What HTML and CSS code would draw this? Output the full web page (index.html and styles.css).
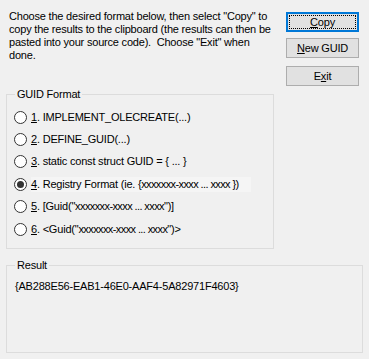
FILE: index.html
```html
<!DOCTYPE html>
<html lang="en">
<head>
    <meta charset="UTF-8">
    <title>Create GUID</title>
    <link rel="stylesheet" href="styles.css">
</head>
<body>
    <div class="top">
        <p class="intro">Choose the desired format below, then select "Copy" to<br>copy the results to the clipboard (the results can then be<br>pasted into your source code).&nbsp; Choose "Exit" when<br>done.</p>
        <div class="buttons">
            <button class="btn default"><span class="focus"><u>C</u>opy</span></button>
            <button class="btn"><u>N</u>ew GUID</button>
            <button class="btn exit">E<u>x</u>it</button>
        </div>
    </div>

    <fieldset class="group formats">
        <legend>GUID Format</legend>
        <div class="row"><span class="radio"></span><span class="label"><u>1</u>. IMPLEMENT_OLECREATE(...)</span></div>
        <div class="row"><span class="radio"></span><span class="label"><u>2</u>. DEFINE_GUID(...)</span></div>
        <div class="row"><span class="radio"></span><span class="label"><u>3</u>. static const struct GUID = { ... }</span></div>
        <div class="row"><span class="radio checked"></span><span class="label lit"><u>4</u>. Registry Format (ie. <span class="xs">{xxxxxxx-xxxx ... xxxx }</span>)</span></div>
        <div class="row"><span class="radio"></span><span class="label"><u>5</u>. [Guid("<span class="xs">xxxxxxx-xxxx ... xxxx</span>")]</span></div>
        <div class="row"><span class="radio"></span><span class="label"><u>6</u>. &lt;Guid("<span class="xs">xxxxxxx-xxxx ... xxxx</span>")&gt;</span></div>
    </fieldset>

    <fieldset class="group result">
        <legend>Result</legend>
        <div class="guid">{AB288E56-EAB1-46E0-AAF4-5A82971F4603}</div>
    </fieldset>
</body>
</html>
```

FILE: styles.css
```css
* {
    box-sizing: border-box;
}
body {
    margin: 0;
    background: #f0f0f0;
    font-family: "Liberation Sans", Arial, sans-serif;
    font-size: 11px;
    line-height: 13px;
    letter-spacing: -0.2px;
    color: #000;
}
u {
    text-decoration: underline;
    text-underline-offset: 1px;
}
.top {
    display: flex;
    height: 88px;
}
.intro {
    margin: 0;
    padding: 10px 0 0 9px;
    width: 286px;
}
.buttons {
    display: flex;
    flex-direction: column;
    padding-top: 12px;
}
.btn {
    width: 73px;
    height: 20px;
    padding: 0;
    background: #e1e1e1;
    border: 1px solid #adadad;
    font: inherit;
    letter-spacing: inherit;
    color: #000;
}
.btn + .btn {
    margin-top: 6px;
}
.btn.exit {
    margin-top: 8px;
}
.btn.default {
    border-color: #0078d7;
    box-shadow: inset 0 0 0 1px #0078d7;
    padding: 2px;
}
.focus {
    display: block;
    height: 100%;
    line-height: 13px;
    border: 1px dotted #000;
}
.group {
    margin: 0 0 0 6px;
    padding: 0 8px 0 8px;
    border: 1px solid #dcdcdc;
}
.group legend {
    padding: 0 2px;
    line-height: 13px;
}
.formats {
    width: 268px;
    padding-top: 5px;
    padding-bottom: 8px;
}
.row {
    display: flex;
    align-items: center;
    height: 22.4px;
}
.radio {
    width: 13px;
    height: 13px;
    margin-left: -1px;
    border: 1px solid #333;
    border-radius: 50%;
    background: #fff;
    display: flex;
    align-items: center;
    justify-content: center;
}
.radio.checked::after {
    content: "";
    width: 7px;
    height: 7px;
    border-radius: 50%;
    background: #333;
}
.label {
    margin-left: 4px;
    padding-right: 12px;
    line-height: 15px;
}
.label.lit {
    background: #f5f5f5;
}
.xs {
    letter-spacing: -0.6px;
}
.result {
    width: 357px;
    height: 94px;
    margin-top: 10px;
}
.guid {
    padding-top: 8px;
}
```
